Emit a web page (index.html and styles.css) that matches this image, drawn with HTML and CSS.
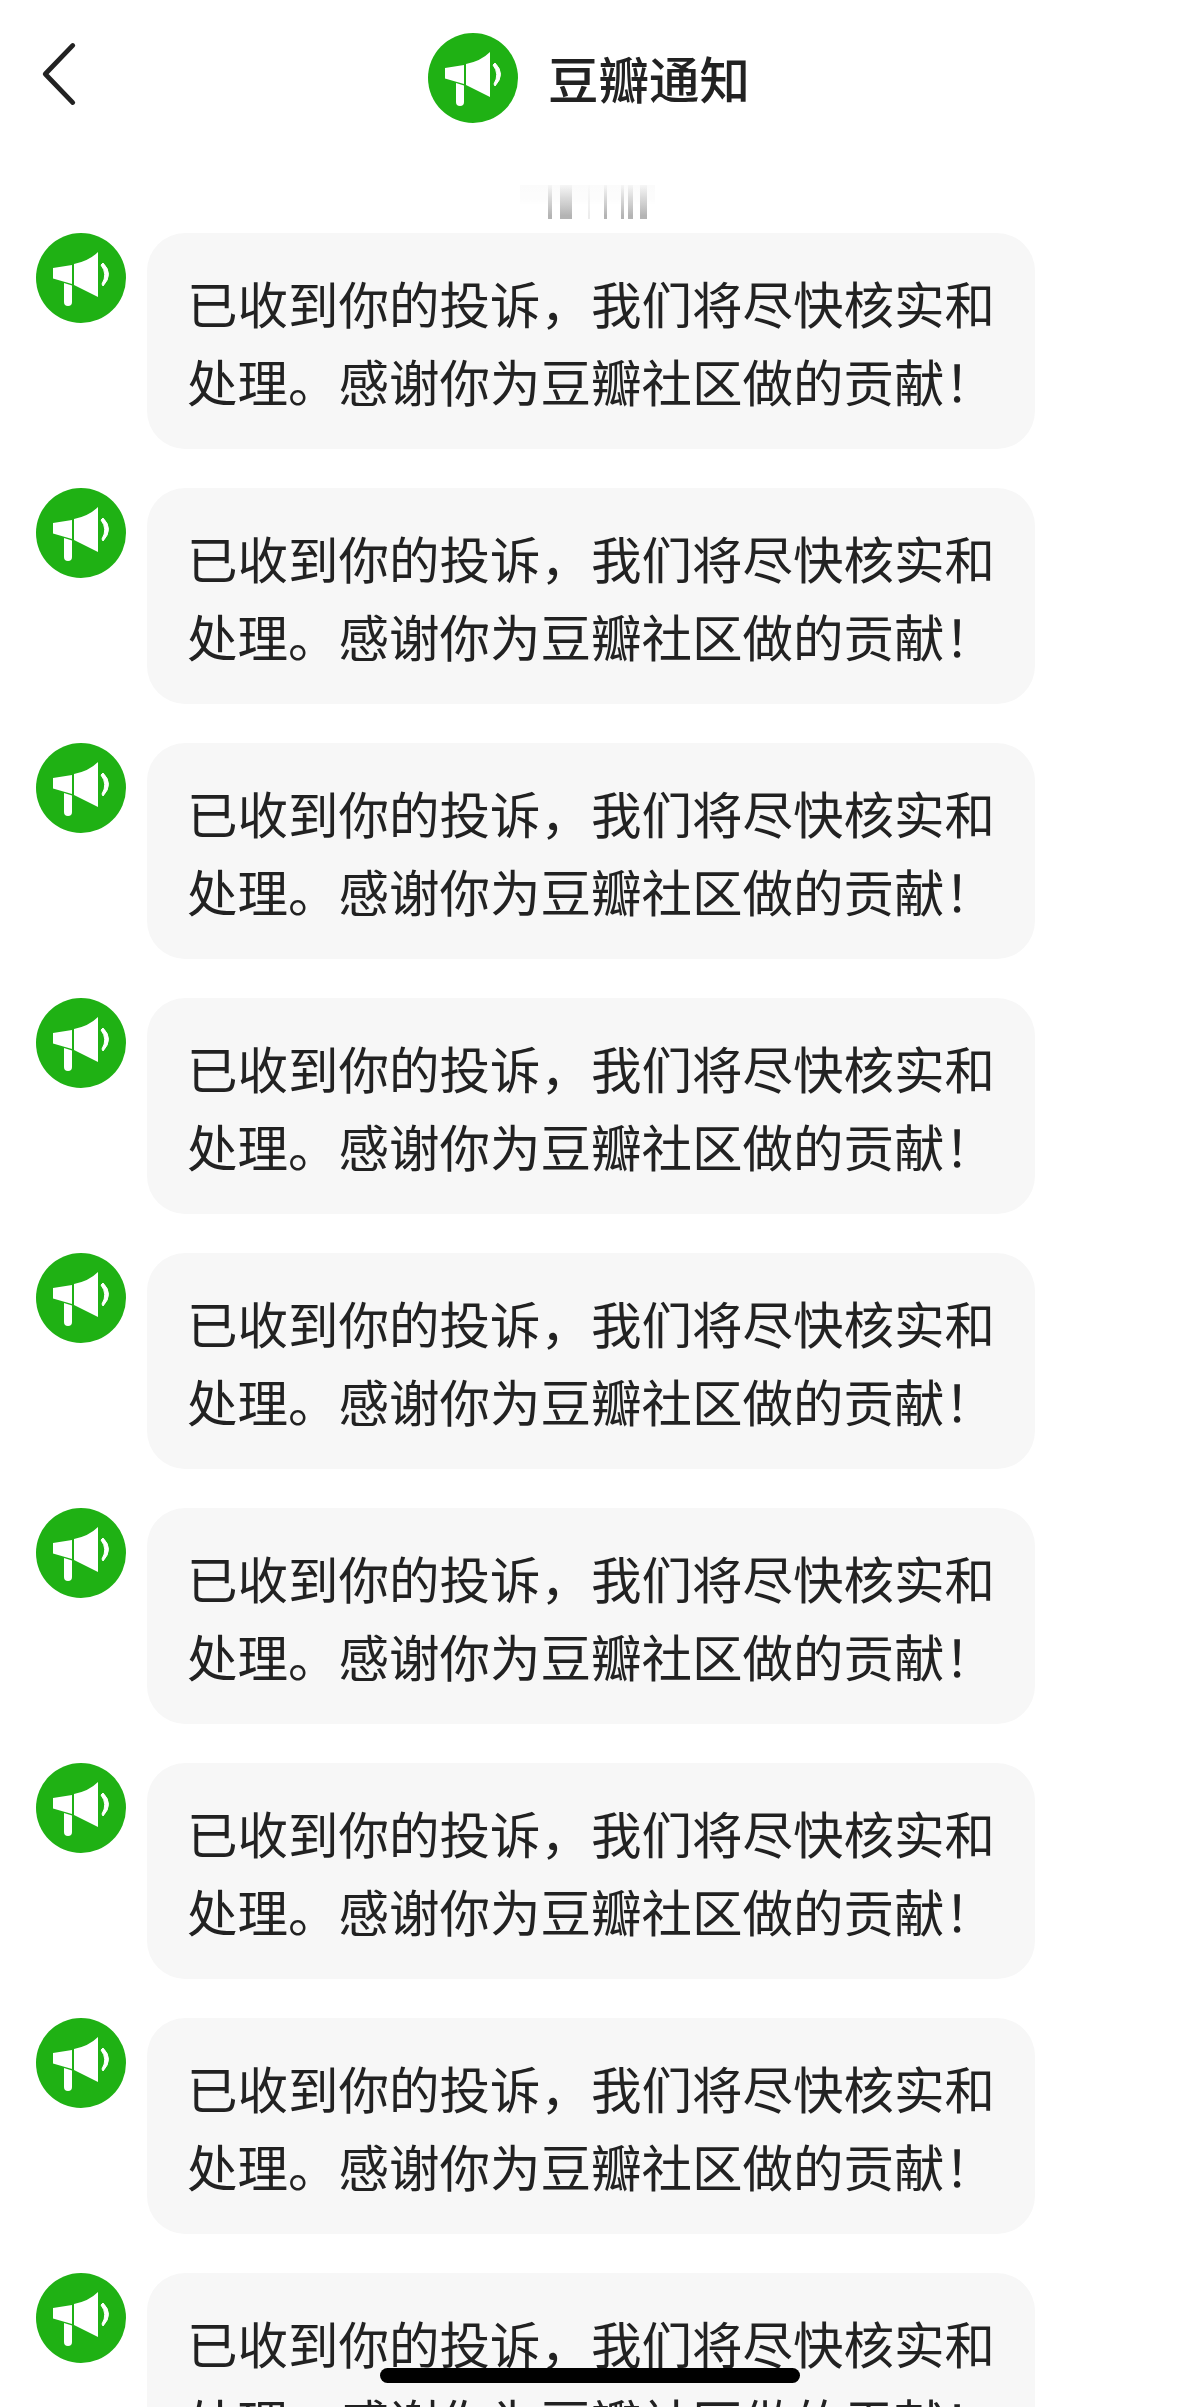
FILE: index.html
```html
<!DOCTYPE html>
<html lang="zh-CN">
<head>
  <meta charset="UTF-8" />
  <title>豆瓣通知</title>
  <link rel="stylesheet" href="styles.css">
</head>
<body>
  <svg class="sprite" width="0" height="0">
    <symbol id="notice-icon" viewBox="0 0 90 90">
      <circle cx="45" cy="45" r="45" fill="#1fb114" />
      <!-- horn -->
      <path d="M62 19 V64 L38 52 V31 Q53 28 62 19 Z" fill="#fff" />
      <path d="M17 35 L36 32 V51 L17 45.500 Z" fill="#fff" />
      <!-- handle -->
      <path d="M28 50 L36 52.500 V69 Q36 73 32 73 Q28 73 28 69 Z" fill="#fff" />
      <!-- sound wave -->
      <path d="M67 30 Q78 41 67 53 L66 51 Q72 41 65 32 Z" fill="#fff" stroke="#fff" stroke-width="1" stroke-linejoin="round" />
    </symbol>
  </svg>

  <!-- Top bar -->
  <header class="top-bar">
    <svg class="back-icon" viewBox="0 0 34 60">
      <path d="M30 3 L4 30 L30 57" fill="none" stroke="#222" stroke-width="4.500" stroke-linecap="round" stroke-linejoin="round" />
    </svg>
    <svg class="avatar"><use href="#notice-icon" /></svg>
    <h1 class="title">豆瓣通知</h1>
  </header>

  <!-- Blurred remains of the row above -->
  <div class="fade-strip">
    <span class="bar bar-1"></span>
    <span class="bar bar-2"></span>
    <span class="bar bar-3"></span>
    <span class="bar bar-4"></span>
    <span class="bar bar-5"></span>
    <span class="bar bar-6"></span>
    <span class="bar bar-7"></span>
  </div>

  <!-- Message list -->
  <main class="message-list">
    <div class="message">
      <svg class="avatar"><use href="#notice-icon" /></svg>
      <p class="bubble">已收到你的投诉&#65292;我们将尽快核实和处理。感谢你为豆瓣社区做的贡献&#65281;</p>
    </div>
    <div class="message">
      <svg class="avatar"><use href="#notice-icon" /></svg>
      <p class="bubble">已收到你的投诉&#65292;我们将尽快核实和处理。感谢你为豆瓣社区做的贡献&#65281;</p>
    </div>
    <div class="message">
      <svg class="avatar"><use href="#notice-icon" /></svg>
      <p class="bubble">已收到你的投诉&#65292;我们将尽快核实和处理。感谢你为豆瓣社区做的贡献&#65281;</p>
    </div>
    <div class="message">
      <svg class="avatar"><use href="#notice-icon" /></svg>
      <p class="bubble">已收到你的投诉&#65292;我们将尽快核实和处理。感谢你为豆瓣社区做的贡献&#65281;</p>
    </div>
    <div class="message">
      <svg class="avatar"><use href="#notice-icon" /></svg>
      <p class="bubble">已收到你的投诉&#65292;我们将尽快核实和处理。感谢你为豆瓣社区做的贡献&#65281;</p>
    </div>
    <div class="message">
      <svg class="avatar"><use href="#notice-icon" /></svg>
      <p class="bubble">已收到你的投诉&#65292;我们将尽快核实和处理。感谢你为豆瓣社区做的贡献&#65281;</p>
    </div>
    <div class="message">
      <svg class="avatar"><use href="#notice-icon" /></svg>
      <p class="bubble">已收到你的投诉&#65292;我们将尽快核实和处理。感谢你为豆瓣社区做的贡献&#65281;</p>
    </div>
    <div class="message">
      <svg class="avatar"><use href="#notice-icon" /></svg>
      <p class="bubble">已收到你的投诉&#65292;我们将尽快核实和处理。感谢你为豆瓣社区做的贡献&#65281;</p>
    </div>
    <div class="message">
      <svg class="avatar"><use href="#notice-icon" /></svg>
      <p class="bubble">已收到你的投诉&#65292;我们将尽快核实和处理。感谢你为豆瓣社区做的贡献&#65281;</p>
    </div>
    <div class="message">
      <svg class="avatar"><use href="#notice-icon" /></svg>
      <p class="bubble">已收到你的投诉&#65292;我们将尽快核实和处理。感谢你为豆瓣社区做的贡献&#65281;</p>
    </div>
  </main>

  <div class="home-indicator"></div>
</body>
</html>
```

FILE: styles.css
```css
* {
  box-sizing: border-box;
  margin: 0;
  padding: 0;
}

html,
body {
  height: 2407px;
  overflow: hidden;
}

body {
  background: #fff;
  color: #222;
  font-family: "Noto Sans CJK SC", "Noto Sans", sans-serif;
}

.sprite {
  display: block;
}

/* Top bar */
.top-bar {
  display: flex;
  align-items: center;
  height: 156px;
  padding-left: 41px;
}

.back-icon {
  width: 36px;
  height: 64px;
  margin-right: 351px;
  margin-bottom: 8px;
}

.avatar {
  flex: none;
  width: 90px;
  height: 90px;
}

.title {
  margin-left: 30px;
  margin-bottom: 3px;
  font-size: 50.500px;
  font-weight: 500;
  line-height: 60px;
  color: #222;
}

/* Fade strip */
.fade-strip {
  display: flex;
  width: 135px;
  height: 34px;
  margin: 29px 0 14px 520px;
  background: linear-gradient(to bottom, rgba(0,0,0,0.015), rgba(0,0,0,0.01) 40%, transparent 60%);
}

.bar {
  background: linear-gradient(to bottom, rgba(130,130,130,0.04), rgba(130,130,130,0.6) 90%);
}

.bar-1 { width: 4px; margin-left: 28px; }
.bar-2 { width: 12px; margin-left: 8px; }
.bar-3 { width: 2px; margin-left: 16px; opacity: 0.25; }
.bar-4 { width: 3px; margin-left: 14px; }
.bar-5 { width: 3px; margin-left: 14px; }
.bar-6 { width: 5px; margin-left: 4px; }
.bar-7 { width: 7px; margin-left: 7px; }

/* Messages */
.message-list {
  display: flex;
  flex-direction: column;
  gap: 39px;
  padding-left: 36px;
}

.message {
  display: flex;
  align-items: flex-start;
  gap: 21px;
}

.bubble {
  flex: none;
  width: 888px;
  height: 216px;
  padding: 30px 40px;
  background: #f7f7f7;
  border-radius: 38px;
  font-size: 50.500px;
  line-height: 78px;
}

.home-indicator {
  position: fixed;
  left: 380px;
  top: 2368px;
  width: 420px;
  height: 15px;
  background: #000;
  border-radius: 8px;
}
```
